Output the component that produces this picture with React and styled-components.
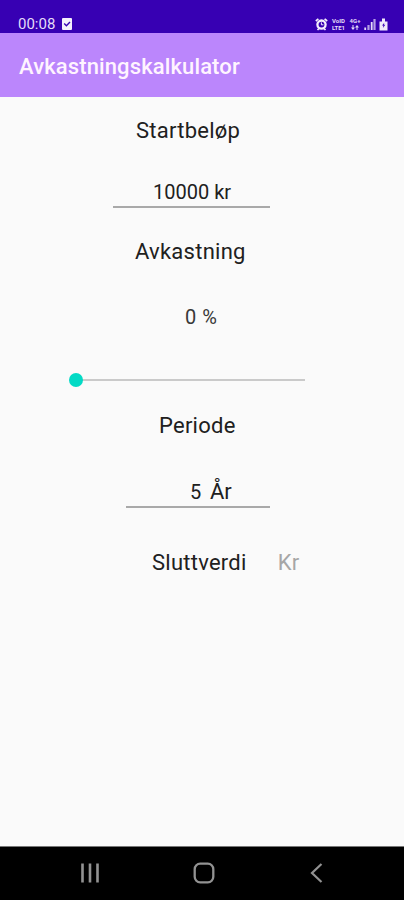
import React, { useState } from "react";
import styled, { createGlobalStyle } from "styled-components";

const GlobalStyle = createGlobalStyle`
  body {
    margin: 0;
    background-color: #fafafa;
    font-family: Roboto, sans-serif;
  }

  * {
    box-sizing: border-box;
  }
`;

const Screen = styled.div`
  display: flex;
  flex-direction: column;
  width: 404px;
  height: 900px;
  overflow: hidden;
  background-color: #fafafa;
`;

const StatusBar = styled.div`
  display: flex;
  align-items: center;
  justify-content: space-between;
  height: 33px;
  padding: 15px 16px 0 18px;
  background-color: #3700b3;
  color: #e4dcf8;
`;

const StatusGroup = styled.div`
  display: flex;
  align-items: center;
  gap: ${(props) => props.$gap}px;
`;

const Clock = styled.span`
  font-size: 15px;
  line-height: 18px;
`;

const NetworkLabel = styled.span`
  display: flex;
  flex-direction: column;
  align-items: center;
  width: ${(props) => props.$width}px;
  font-size: 6px;
  font-weight: 700;
  line-height: 7px;
`;

const Arrows = styled.svg`
  margin: 1px 0;
`;

const AppBar = styled.header`
  display: flex;
  align-items: center;
  height: 64px;
  padding: 3px 19px 0;
  background-color: #bb86fc;
`;

const Title = styled.h1`
  margin: 0;
  color: #fff4ff;
  font-size: 22px;
  font-weight: 500;
  line-height: 30px;
  letter-spacing: 0.12px;
`;

const Content = styled.main`
  display: flex;
  flex: 1;
  flex-direction: column;
  align-items: flex-start;
  padding-top: 19px;
  color: #202020;
`;

const Label = styled.div`
  margin-top: ${(props) => props.$top || 0}px;
  margin-left: ${(props) => props.$left}px;
  font-size: 22px;
  line-height: 30px;
  letter-spacing: 0.25px;
`;

const Field = styled.div`
  display: flex;
  align-items: baseline;
  width: ${(props) => props.$width}px;
  height: 31px;
  margin-top: ${(props) => props.$top}px;
  margin-left: ${(props) => props.$left}px;
  padding-left: ${(props) => props.$indent}px;
  border-bottom: 2px solid #a9a9a9;
`;

const Input = styled.input`
  width: ${(props) => props.$width}px;
  height: 30px;
  padding: 0;
  border: 0;
  outline: none;
  background: none;
  color: #202020;
  font-family: inherit;
  font-size: 20px;
  line-height: 30px;
`;

const Unit = styled.span`
  font-size: 22px;
  line-height: 30px;
`;

const Percent = styled.div`
  margin-top: 35px;
  margin-left: 185px;
  font-size: 20px;
  line-height: 30px;
  color: #383838;
  word-spacing: 1px;
`;

const Slider = styled.input`
  appearance: none;
  width: 236px;
  height: 14px;
  margin: 41px 0 0 69px;
  background: linear-gradient(#cacaca, #cacaca) 7px 6px / 229px 2px no-repeat;

  &::-webkit-slider-thumb {
    appearance: none;
    width: 14px;
    height: 14px;
    border-radius: 50%;
    background-color: #03dac5;
  }
`;

const Result = styled.div`
  display: flex;
  margin-top: 39px;
`;

const Currency = styled(Label)`
  color: #a6a6a6;
`;

const NavBar = styled.nav`
  display: flex;
  align-items: center;
  justify-content: space-between;
  height: 54px;
  padding: 0 77px 2px 80px;
  border-top: 1px solid #777;
  background-color: #000;
  color: #929292;
`;

const CheckIcon = () => (
  <svg width="10" height="12" viewBox="0 0 10 12">
    <rect width="10" height="12" rx="1" fill="#f4effc" />
    <path d="M2.2 5.6 4.4 7.8 8 4" fill="none" stroke="#3700b3" strokeWidth="1.4" />
  </svg>
);

const AlarmIcon = () => (
  <svg width="13" height="13" viewBox="0 0 13 13">
    <path d="M.8 3 3.4.9M12.2 3 9.6.9M2.5 12 4 10.5M10.5 12 9 10.5" stroke="#f4effc" strokeWidth="1.7" />
    <circle cx="6.5" cy="6.6" r="4.1" fill="#3700b3" stroke="#f4effc" strokeWidth="2.3" />
    <path d="M6.4 4.4v2.4h2" fill="none" stroke="#f4effc" strokeWidth="1" />
  </svg>
);

const ArrowsIcon = () => (
  <Arrows width="8" height="5" viewBox="0 0 8 5" fill="currentColor">
    <path d="M1.5 0h1v2.5H4L2 5 0 2.5h1.5zM5.5 5h1V2.5H8L6 0 4 2.5h1.5z" />
  </Arrows>
);

const SignalIcon = () => (
  <svg width="12" height="12" viewBox="0 0 12 12">
    <path d="M1.2 12V9.5M7.7 12V4" stroke="#e4dcf8" strokeWidth="1.8" />
    <path d="M4.5 12V7M10.5 12V1" stroke="#b49de4" strokeWidth="2.2" />
  </svg>
);

const BatteryIcon = () => (
  <svg width="9" height="13" viewBox="0 0 9 13">
    <path d="M3 .5h3v3h2.5v9H.5v-9H3z" fill="#f0eafb" />
    <path d="M5.3 4.8 3 7.6h1.4L3.9 10l2.4-3.3H4.9z" fill="#3700b3" />
  </svg>
);

const RecentsIcon = () => (
  <svg width="20" height="20" viewBox="0 0 20 20" stroke="currentColor" strokeWidth="2.6">
    <path d="M2.5.5v19M10 .5v19M17.5.5v19" />
  </svg>
);

const HomeIcon = () => (
  <svg width="22" height="22" viewBox="0 0 22 22" fill="none" stroke="currentColor" strokeWidth="2.3">
    <rect x="1.7" y="1.7" width="18.6" height="18.6" rx="5.5" />
  </svg>
);

const BackIcon = () => (
  <svg width="20" height="20" viewBox="0 0 20 20" fill="none" stroke="currentColor" strokeWidth="2.2">
    <path d="M14.5 1 5 10l9.5 9" />
  </svg>
);

const App = () => {
  const [amount, setAmount] = useState("10000 kr");
  const [rate, setRate] = useState(0);
  const [years, setYears] = useState("5");

  return (
    <Screen>
      <GlobalStyle />
      <StatusBar>
        <StatusGroup $gap={7}>
          <Clock>00:08</Clock>
          <CheckIcon />
        </StatusGroup>
        <StatusGroup $gap={3}>
          <AlarmIcon />
          <NetworkLabel $width={15}>
            <span>VoID</span>
            <span>LTE1</span>
          </NetworkLabel>
          <NetworkLabel $width={12}>
            <span>4G+</span>
            <ArrowsIcon />
          </NetworkLabel>
          <SignalIcon />
          <BatteryIcon />
        </StatusGroup>
      </StatusBar>

      <AppBar>
        <Title>Avkastningskalkulator</Title>
      </AppBar>

      <Content>
        <Label $left={136}>Startbeløp</Label>
        <Field $width={157} $top={31} $left={113} $indent={40}>
          <Input $width={110} value={amount} onChange={(e) => setAmount(e.target.value)} />
        </Field>

        <Label $top={29} $left={135}>Avkastning</Label>
        <Percent>{rate} %</Percent>
        <Slider
          type="range"
          min="0"
          max="100"
          value={rate}
          onChange={(e) => setRate(e.target.value)}
        />

        <Label $top={24} $left={159}>Periode</Label>
        <Field $width={144} $top={36} $left={126} $indent={64}>
          <Input $width={20} value={years} onChange={(e) => setYears(e.target.value)} />
          <Unit>År</Unit>
        </Field>

        <Result>
          <Label $top={1} $left={152}>Sluttverdi</Label>
          <Currency $top={1} $left={31}>Kr</Currency>
        </Result>
      </Content>

      <NavBar>
        <RecentsIcon />
        <HomeIcon />
        <BackIcon />
      </NavBar>
    </Screen>
  );
};

export default App;
